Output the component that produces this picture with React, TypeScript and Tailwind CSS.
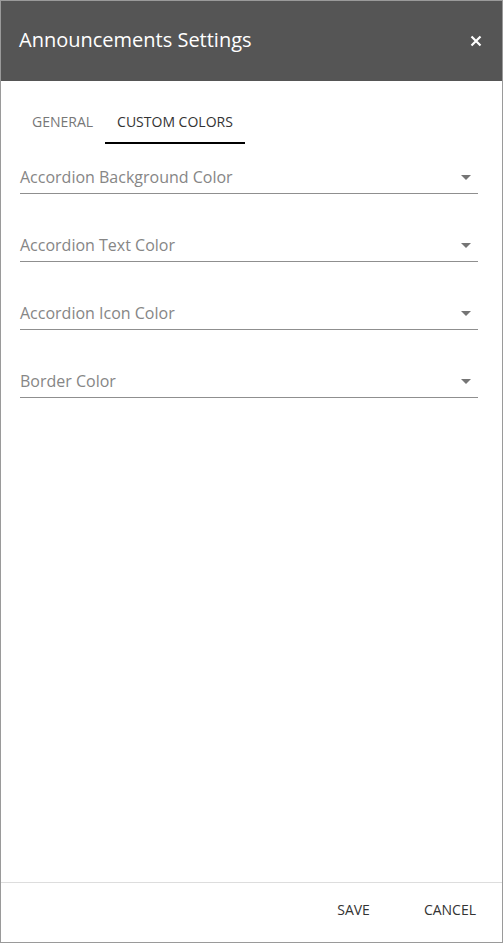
import React from "react";

const FIELDS = [
  "Accordion Background Color",
  "Accordion Text Color",
  "Accordion Icon Color",
  "Border Color",
];

function Caret() {
  return (
    <svg width="10" height="5" viewBox="0 0 10 5" className="shrink-0 mr-[7px]">
      <path d="M0 0 L10 0 L5 5 Z" fill="#757575" />
    </svg>
  );
}

export default function App() {
  return (
    <div
      className="w-[503px] h-[943px] border border-[#9a9a9a] bg-white flex flex-col"
      style={{ fontFamily: "'Open Sans', 'Noto Sans', sans-serif" }}
    >
      {/* Header */}
      <div className="h-[80px] bg-[#555555] flex items-center justify-between pl-[18px] pr-[20px] pb-[3px] shrink-0">
        <span className="text-white text-[20px]">Announcements Settings</span>
        <button className="text-white pt-[2px]">
          <svg width="12" height="12" viewBox="0 0 12 12">
            <path d="M1.5 1.5 L10.5 10.5 M10.5 1.5 L1.5 10.5" stroke="#fff" strokeWidth="2.2" />
          </svg>
        </button>
      </div>

      {/* Body */}
      <div className="flex-1 pl-[19px] pr-[24px]">
        <div className="flex mt-[19px]">
          <div className="px-3 h-[44px] pt-[1px] flex items-center text-[14px] text-[#777] border-b-2 border-transparent">
            GENERAL
          </div>
          <div className="px-3 h-[44px] pt-[1px] flex items-center text-[14px] text-[#333] border-b-2 border-black">
            CUSTOM COLORS
          </div>
        </div>

        <div className="flex flex-col gap-[39px] mt-[21px]">
          {FIELDS.map((label) => (
            <div
              key={label}
              className="flex items-center justify-between border-b border-[#8f8f8f] pb-[4px] h-[29px]"
            >
              <span className="text-[16px] text-[#868686] leading-[24px]">{label}</span>
              <Caret />
            </div>
          ))}
        </div>
      </div>

      {/* Footer */}
      <div className="h-[60px] border-t border-[#dddddd] flex items-center justify-end gap-[22px] pr-[10px] pb-[6px] shrink-0">
        <button className="px-4 text-[14px] text-[#333]">SAVE</button>
        <button className="px-4 text-[14px] text-[#333]">CANCEL</button>
      </div>
    </div>
  );
}
